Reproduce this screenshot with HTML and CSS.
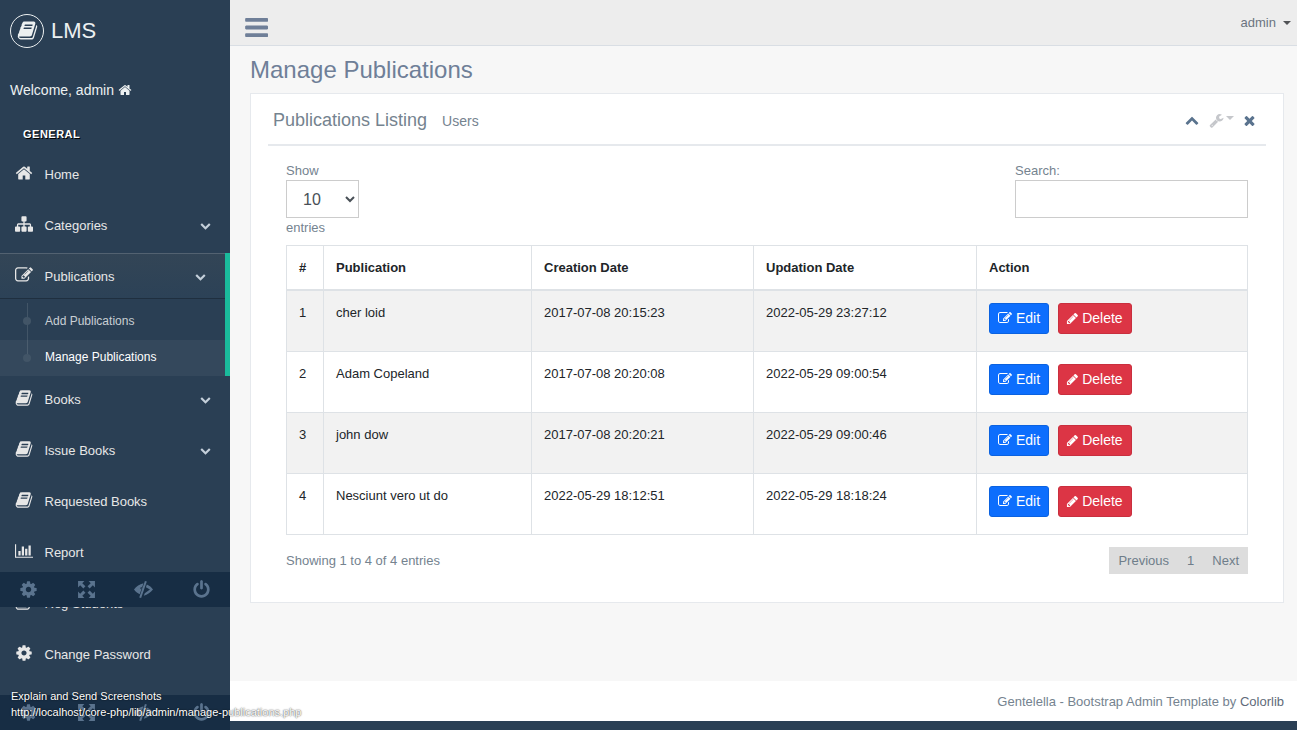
FILE: index.html
```html
<!DOCTYPE html>
<html lang="en">
<head>
<meta charset="utf-8">
<title>Manage Publications</title>
<link rel="stylesheet" href="styles.css">
</head>
<body>
<svg class="defs" width="0" height="0" aria-hidden="true">
  <symbol id="i-home" viewBox="0 0 1792 1792"><path d="M1472 992v480q0 26-19 45t-45 19h-384v-384h-256v384h-384q-26 0-45-19t-19-45v-480q0-1 .5-3t.5-3l575-474 575 474q1 2 1 6zm223-69l-62 74q-8 9-21 11h-3q-13 0-21-7l-692-577-692 577q-12 8-24 7-13-2-21-11l-62-74q-8-10-7-23.5t11-21.5l719-599q32-26 76-26t76 26l244 204v-195q0-14 9-23t23-9h192q14 0 23 9t9 23v408l219 182q10 8 11 21.5t-7 23.5z"/></symbol>
  <symbol id="i-sitemap" viewBox="0 0 1792 1792"><path d="M1792 1248v320q0 40-28 68t-68 28h-320q-40 0-68-28t-28-68v-320q0-40 28-68t68-28h96v-192h-512v192h96q40 0 68 28t28 68v320q0 40-28 68t-68 28h-320q-40 0-68-28t-28-68v-320q0-40 28-68t68-28h96v-192h-512v192h96q40 0 68 28t28 68v320q0 40-28 68t-68 28h-320q-40 0-68-28t-28-68v-320q0-40 28-68t68-28h96v-192q0-52 38-90t90-38h512v-192h-96q-40 0-68-28t-28-68v-320q0-40 28-68t68-28h320q40 0 68 28t28 68v320q0 40-28 68t-68 28h-96v192h512q52 0 90 38t38 90v192h96q40 0 68 28t28 68z"/></symbol>
  <symbol id="i-edit" viewBox="0 0 1792 1792"><path d="M888 1184l116-116-152-152-116 116v56h96v96h56zm440-720q-16-16-33 1l-350 350q-17 17-1 33t33-1l350-350q17-17 1-33zm80 594v190q0 119-84.5 203.5t-203.5 84.5h-832q-119 0-203.5-84.5t-84.5-203.5v-832q0-119 84.5-203.5t203.5-84.5h832q63 0 117 25 15 7 18 23 3 17-9 29l-49 49q-14 14-32 8-23-6-45-6h-832q-66 0-113 47t-47 113v832q0 66 47 113t113 47h832q66 0 113-47t47-113v-126q0-13 9-22l64-64q15-15 35-7t20 29zm-96-738l288 288-672 672h-288v-288zm444 132l-92 92-288-288 92-92q28-28 68-28t68 28l152 152q28 28 28 68t-28 68z"/></symbol>
  <symbol id="i-book" viewBox="0 0 1792 1792"><path d="M1703 478q40 57 18 129l-275 906q-19 64-76.5 107.5t-122.5 43.5h-923q-77 0-148.5-53.5t-99.5-131.5q-24-67-2-127 0-4 3-27t4-37q1-8-3-21.5t-3-19.5q2-11 8-21t16.5-23.5 16.5-23.5q23-38 45-91.5t30-91.5q3-10 .5-30t-.5-28q3-11 17-28t17-23q21-36 42-92t25-90q1-9-2.5-32t.5-28q4-13 22-30.5t22-22.5q19-26 42.5-84.5t27.5-96.5q1-8-3-25.5t-2-26.5q2-8 9-18t18-23 17-21q8-12 16.5-30.5t15-35 16-36 19.5-32 26.5-23.5 36-11.5 47.5 5.5l-1 3q38-9 51-9h761q74 0 114 56t18 130l-274 906q-36 119-71.5 153.5t-128.5 34.5h-869q-27 0-38 15-11 16-1 43 24 70 144 70h923q29 0 56-15.5t35-41.5l300-987q7-22 5-57 38 15 59 43zm-1064 2q-4 13 2 22.5t20 9.5h608q13 0 25.5-9.5t16.5-22.5l21-64q4-13-2-22.5t-20-9.5h-608q-13 0-25.5 9.5t-16.5 22.5zm-83 256q-4 13 2 22.5t20 9.5h608q13 0 25.5-9.5t16.5-22.5l21-64q4-13-2-22.5t-20-9.5h-608q-13 0-25.5 9.5t-16.5 22.5z"/></symbol>
  <symbol id="i-chart" viewBox="0 0 2048 1792"><path d="M640 896v512h-256v-512h256zm384-512v1024h-256v-1024h256zm1024 1152v128h-2048v-1536h128v1408h1920zm-640-896v768h-256v-768h256zm384-384v1152h-256v-1152h256z"/></symbol>
  <symbol id="i-cog" viewBox="0 0 1792 1792"><path d="M1152 896q0-106-75-181t-181-75-181 75-75 181 75 181 181 75 181-75 75-181zm512-109v222q0 12-8 23t-20 13l-185 28q-19 54-39 91 35 50 107 138 10 12 10 25t-9 23q-27 37-99 108t-94 71q-12 0-26-9l-138-108q-44 23-91 38-16 136-29 186-7 28-36 28h-222q-14 0-24.5-8.5t-11.5-21.5l-28-184q-49-16-90-37l-141 107q-10 9-25 9-14 0-25-11-126-114-165-168-7-10-7-23 0-12 8-23 15-21 51-66.5t54-70.5q-27-50-41-99l-183-27q-13-2-21-12.5t-8-23.5v-222q0-12 8-23t19-13l186-28q14-46 39-92-40-57-107-138-10-12-10-24 0-10 9-23 26-36 98.5-107.5t94.5-71.5q13 0 26 10l138 107q44-23 91-38 16-136 29-186 7-28 36-28h222q14 0 24.5 8.5t11.5 21.5l28 184q49 16 90 37l142-107q9-9 24-9 13 0 25 10 129 119 165 170 7 8 7 22 0 12-8 23-15 21-51 66.5t-54 70.5q26 50 41 98l183 28q13 2 21 12.5t8 23.5z"/></symbol>
  <symbol id="i-chev" viewBox="0 0 1792 1792"><path d="M1683 808l-742 741q-19 19-45 19t-45-19l-742-741q-19-19-19-45.5t19-45.5l166-165q19-19 45-19t45 19l531 531 531-531q19-19 45-19t45 19l166 165q19 19 19 45.5t-19 45.5z"/></symbol>
  <symbol id="i-pencil" viewBox="0 0 1792 1792"><path d="M491 1536l91-91-235-235-91 91v107h128v128h107zm523-928q0-22-22-22-10 0-17 7l-542 542q-7 7-7 17 0 22 22 22 10 0 17-7l542-542q7-7 7-17zm-54-192l416 416-832 832h-416v-416zm683 96q0 53-37 90l-166 166-416-416 166-165q36-38 90-38 53 0 91 38l235 234q37 39 37 91z"/></symbol>
  <symbol id="i-full" viewBox="0 0 18 18"><path d="M1 1h6L5 3l3 3-2 2-3-3-2 2zM17 1v6l-2-2-3 3-2-2 3-3-2-2zM1 17v-6l2 2 3-3 2 2-3 3 2 2zM17 17h-6l2-2-3-3 2-2 3 3 2-2z"/></symbol>
  <symbol id="i-eye" viewBox="0 0 20 18"><path fill-rule="evenodd" d="M10 2.500C5.800 3.500 2.500 5.800 0 9c1.500 2.200 3.600 3.900 6 5zM7.700 6.600a1.100 1.100 0 1 0 .2 2.200 1.100 1.100 0 1 0-.2-2.200z"/><path d="M11.500 0l2 .7L7.500 18l-2-.7zM13.500 3.800l-1 2.800L16.800 9 11.300 13l-1 2.500c3.900-1 7.300-3.400 9.700-6.500-1.500-2.200-3.700-4-6.500-5.200z"/></symbol>
  <symbol id="i-power" viewBox="0 0 1792 1792"><path d="M1664 896q0 156-61 298t-164 245-245 164-298 61-298-61-245-164-164-245-61-298q0-182 80.500-343t226.500-270q43-32 95.500-25t83.500 50q32 42 24.500 94.500t-49.500 84.500q-98 74-151.500 181t-53.500 228q0 104 40.500 198.500t109.500 163.500 163.500 109.500 198.500 40.500 198.500-40.500 163.500-109.500 109.500-163.500 40.500-198.500q0-121-53.500-228t-151.500-181q-42-32-49.500-84.500t24.500-94.500q31-43 84-50t95 25q146 109 226.500 270t80.500 343zm-640-768v640q0 52-38 90t-90 38-90-38-38-90v-640q0-52 38-90t90-38 90 38 38 90z"/></symbol>
  <symbol id="i-bars" viewBox="64 256 1664 1280" preserveAspectRatio="none"><path d="M1664 1344v128q0 26-19 45t-45 19h-1408q-26 0-45-19t-19-45v-128q0-26 19-45t45-19h1408q26 0 45 19t19 45zm0-512v128q0 26-19 45t-45 19h-1408q-26 0-45-19t-19-45v-128q0-26 19-45t45-19h1408q26 0 45 19t19 45zm0-512v128q0 26-19 45t-45 19h-1408q-26 0-45-19t-19-45v-128q0-26 19-45t45-19h1408q26 0 45 19t19 45z" transform="translate(-64 0) scale(1.08 1)"/></symbol>
  <symbol id="i-wrench" viewBox="0 0 1792 1792"><path d="M448 1472q0-26-19-45t-45-19-45 19-19 45 19 45 45 19 45-19 19-45zm644-420l-682 682q-37 37-90 37-52 0-91-37l-106-108q-38-36-38-90 0-53 38-91l681-681q39 98 114.500 173.500t173.500 114.500zm634-435q0 39-23 106-47 134-164.500 217.500t-258.500 83.500q-185 0-316.500-131.500t-131.500-316.500 131.500-316.500 316.500-131.500q58 0 121.500 16.500t107.500 46.500q16 11 16 28t-16 28l-293 169v224l193 107q5-3 79-48.500t135.500-81 70.500-35.500q15 0 23.500 10t8.500 25z"/></symbol>
  <symbol id="i-close" viewBox="0 0 1792 1792"><path d="M1490 1322q0 40-28 68l-136 136q-28 28-68 28t-68-28l-294-294-294 294q-28 28-68 28t-68-28l-136-136q-28-28-28-68t28-68l294-294-294-294q-28-28-28-68t28-68l136-136q28-28 68-28t68 28l294 294 294-294q28-28 68-28t68 28l136 136q28 28 28 68t-28 68l-294 294 294 294q28 28 28 68z"/></symbol>
</svg>

<div class="app">
  <aside class="sidebar">
    <div class="brand">
      <span class="brand-ring"><svg class="brand-book"><use href="#i-book"/></svg></span>
      <span class="brand-name">LMS</span>
    </div>
    <p class="welcome">Welcome, admin <svg class="welcome-icon"><use href="#i-home"/></svg></p>
    <h3 class="menu-title">General</h3>
    <ul class="menu">
      <li class="menu-item"><a class="menu-link"><svg class="menu-icon"><use href="#i-home"/></svg>Home</a></li>
      <li class="menu-item"><a class="menu-link"><svg class="menu-icon"><use href="#i-sitemap"/></svg>Categories<svg class="chev"><use href="#i-chev"/></svg></a></li>
      <li class="menu-item is-active">
        <a class="menu-link"><svg class="menu-icon"><use href="#i-edit"/></svg>Publications<svg class="chev"><use href="#i-chev"/></svg></a>
        <ul class="submenu">
          <li class="sub-item">Add Publications</li>
          <li class="sub-item is-current">Manage Publications</li>
        </ul>
      </li>
      <li class="menu-item"><a class="menu-link"><svg class="menu-icon"><use href="#i-book"/></svg>Books<svg class="chev"><use href="#i-chev"/></svg></a></li>
      <li class="menu-item"><a class="menu-link"><svg class="menu-icon"><use href="#i-book"/></svg>Issue Books<svg class="chev"><use href="#i-chev"/></svg></a></li>
      <li class="menu-item"><a class="menu-link"><svg class="menu-icon"><use href="#i-book"/></svg>Requested Books</a></li>
      <li class="menu-item"><a class="menu-link"><svg class="menu-icon"><use href="#i-chart"/></svg>Report</a></li>
      <li class="menu-item"><a class="menu-link"><svg class="menu-icon"><use href="#i-book"/></svg>Reg Students</a></li>
      <li class="menu-item"><a class="menu-link"><svg class="menu-icon"><use href="#i-cog"/></svg>Change Password</a></li>
    </ul>
    <div class="side-bar side-bar-mid">
      <svg class="bar-icon"><use href="#i-cog"/></svg>
      <svg class="bar-icon"><use href="#i-full"/></svg>
      <svg class="bar-icon"><use href="#i-eye"/></svg>
      <svg class="bar-icon"><use href="#i-power"/></svg>
    </div>
    <div class="side-bar side-bar-end">
      <svg class="bar-icon"><use href="#i-cog"/></svg>
      <svg class="bar-icon"><use href="#i-full"/></svg>
      <svg class="bar-icon"><use href="#i-eye"/></svg>
      <svg class="bar-icon"><use href="#i-power"/></svg>
    </div>
  </aside>

  <div class="main">
    <header class="topnav">
      <svg class="burger"><use href="#i-bars"/></svg>
      <span class="user">admin<span class="caret"></span></span>
    </header>

    <main class="content">
      <h3 class="page-title">Manage Publications</h3>
      <section class="panel">
        <div class="panel-head">
          <h2 class="panel-title">Publications Listing</h2>
          <small class="panel-sub">Users</small>
          <div class="panel-tools">
            <svg class="tool tool-up"><use href="#i-chev"/></svg>
            <span class="tool-wrench"><svg class="tool-lg"><use href="#i-wrench"/></svg><span class="tool-caret"></span></span>
            <svg class="tool-lg"><use href="#i-close"/></svg>
          </div>
        </div>

        <div class="panel-body">
          <div class="controls">
            <div class="length">
              <label class="field-label" for="length">Show</label>
              <select class="length-select" id="length"><option>10</option></select>
              <span class="field-label">entries</span>
            </div>
            <div class="search">
              <label class="field-label" for="search">Search:</label>
              <input class="search-input" id="search" type="search">
            </div>
          </div>

          <table class="grid">
            <thead>
              <tr><th class="c-num">#</th><th class="c-pub">Publication</th><th class="c-created">Creation Date</th><th class="c-updated">Updation Date</th><th>Action</th></tr>
            </thead>
            <tbody>
              <tr>
                <td>1</td><td>cher loid</td><td>2017-07-08 20:15:23</td><td>2022-05-29 23:27:12</td>
                <td><div class="actions"><a class="btn btn-edit"><svg class="btn-icon"><use href="#i-edit"/></svg>Edit</a><a class="btn btn-del"><svg class="btn-icon"><use href="#i-pencil"/></svg>Delete</a></div></td>
              </tr>
              <tr>
                <td>2</td><td>Adam Copeland</td><td>2017-07-08 20:20:08</td><td>2022-05-29 09:00:54</td>
                <td><div class="actions"><a class="btn btn-edit"><svg class="btn-icon"><use href="#i-edit"/></svg>Edit</a><a class="btn btn-del"><svg class="btn-icon"><use href="#i-pencil"/></svg>Delete</a></div></td>
              </tr>
              <tr>
                <td>3</td><td>john dow</td><td>2017-07-08 20:20:21</td><td>2022-05-29 09:00:46</td>
                <td><div class="actions"><a class="btn btn-edit"><svg class="btn-icon"><use href="#i-edit"/></svg>Edit</a><a class="btn btn-del"><svg class="btn-icon"><use href="#i-pencil"/></svg>Delete</a></div></td>
              </tr>
              <tr>
                <td>4</td><td>Nesciunt vero ut do</td><td>2022-05-29 18:12:51</td><td>2022-05-29 18:18:24</td>
                <td><div class="actions"><a class="btn btn-edit"><svg class="btn-icon"><use href="#i-edit"/></svg>Edit</a><a class="btn btn-del"><svg class="btn-icon"><use href="#i-pencil"/></svg>Delete</a></div></td>
              </tr>
            </tbody>
          </table>

          <div class="table-foot">
            <span class="info">Showing 1 to 4 of 4 entries</span>
            <nav class="pager"><a class="page">Previous</a><a class="page">1</a><a class="page">Next</a></nav>
          </div>
        </div>
      </section>
    </main>

    <footer class="footer">Gentelella - Bootstrap Admin Template by&nbsp;<a class="footer-link">Colorlib</a></footer>
  </div>
</div>

<div class="status-tip">
  <div>Explain and Send Screenshots</div>
  <div>http://localhost/core-php/lib/admin/manage-publications.php</div>
</div>
</body>
</html>
```
FILE: styles.css
```css
* { box-sizing: border-box; }
html, body { height: 100%; }
body {
  margin: 0;
  background: #2a3f54;
  font-family: "Liberation Sans", Arial, sans-serif;
  font-size: 13px;
  line-height: 1.5;
  color: #75838f;
  overflow: hidden;
}
svg { fill: currentColor; display: block; }
.defs { position: absolute; }
ul { list-style: none; margin: 0; padding: 0; }

.app { display: flex; height: 730px; position: relative; }

/* Sidebar */
.sidebar {
  width: 230px;
  flex: none;
  height: 730px;
  position: relative;
  overflow: hidden;
  color: #e7e7e7;
}
.brand { display: flex; align-items: center; height: 60px; padding: 1px 0 0 10px; gap: 7px; color: #ecf0f1; }
.brand-ring {
  width: 34px; height: 34px;
  border: 1px solid #ecf0f1;
  border-radius: 50%;
  display: flex; align-items: center; justify-content: center;
}
.brand-book { width: 21px; height: 21px; }
.brand-name { font-size: 22px; line-height: 1; }
.welcome {
  margin: 20px 0 0;
  padding-left: 10px;
  height: 20px;
  display: flex; align-items: center; gap: 4px;
  font-size: 14px;
  color: #ecf0f1;
}
.welcome-icon { width: 14px; height: 14px; }
.menu-title {
  margin: 26px 0 0;
  padding-left: 23px;
  height: 16px;
  font-size: 11px;
  line-height: 16px;
  font-weight: 700;
  letter-spacing: .5px;
  text-transform: uppercase;
  color: #fff;
  text-shadow: 1px 1px #000;
}
.menu { margin-top: 10px; }
.menu-item { margin-bottom: 6px; }
.menu-link {
  display: flex; align-items: center;
  height: 45px;
  padding-left: 15px;
  color: #e7e7e7;
  font-size: 13px;
}
.menu-icon { width: 18px; height: 18px; margin-right: 11.5px; margin-top: -3px; flex: none; }
.chev { width: 11px; height: 11px; margin-left: auto; margin-right: 19px; color: #c4cfda; }
.menu-item.is-active {
  margin-top: -1px;
  margin-bottom: 1px;
  border-right: 5px solid #1abb9c;
  height: 123px;
}
.is-active .menu-link {
  height: 45px;
  padding-top: 2px;
  background: linear-gradient(#334556, #2c4257);
  box-shadow: rgba(0,0,0,.25) 0 1px 0, inset rgba(255,255,255,.16) 0 1px 0;
}
.submenu { position: relative; margin-top: 5px; }
.submenu::before {
  content: "";
  position: absolute;
  left: 27px; top: 0; bottom: 17px;
  width: 1px;
  background: #425567;
}
.sub-item {
  position: relative;
  height: 36px;
  line-height: 36px;
  padding-left: 45px;
  font-size: 12px;
  color: rgba(255,255,255,.75);
}
.sub-item::before {
  content: "";
  position: absolute;
  left: 23px; top: 14px;
  width: 8px; height: 8px;
  border-radius: 50%;
  background: #425567;
}
.sub-item.is-current { background: rgba(255,255,255,.05); color: #fff; margin-top: 1px; line-height: 34px; }

.side-bar {
  position: absolute; left: 0; right: 0;
  height: 35px;
  background: #172d44;
  display: grid;
  grid-template-columns: repeat(4, 1fr);
  justify-items: center;
  align-items: center;
  color: #5a738e;
}
.side-bar-mid { top: 572px; }
.side-bar-end { top: 695px; }
.bar-icon { width: 19px; height: 19px; }

/* Main */
.main { flex: 1; min-width: 0; height: 721px; display: flex; flex-direction: column; }
.topnav {
  height: 46px;
  flex: none;
  background: #ededed;
  border-bottom: 1px solid #d9dee4;
  display: flex; align-items: center; justify-content: space-between;
  padding: 0 6px 0 15px;
}
.burger { width: 23px; height: 19px; margin-top: 9px; color: #6f7f98; }
.user { display: flex; align-items: center; color: #6b7480; margin-top: 1px; }
.caret {
  width: 0; height: 0;
  margin-left: 7px;
  border-left: 4px solid transparent;
  border-right: 4px solid transparent;
  border-top: 4px solid #515356;
}
.content { flex: 1; background: #f7f7f7; padding: 0 13px 0 20px; }
.page-title { margin: 10px 0 9px; height: 28px; font-size: 24px; line-height: 28px; font-weight: 400; color: #6f7f98; }
.panel {
  background: #fff;
  border: 1px solid #e6e9ed;
  height: 510px;
  padding: 0 17px;
}
.panel-head {
  display: flex; align-items: center;
  height: 52px;
  padding: 2px 9px 0 5px;
  border-bottom: 2px solid #e6e9ed;
}
.panel-title { margin: 0; font-size: 18px; font-weight: 400; color: #75838f; line-height: 1.5; }
.panel-sub { margin-left: 15px; font-size: 14px; color: #75838f; margin-top: 2px; }
.panel-tools { margin-left: auto; display: flex; align-items: center; color: #5a738e; }
.tool { width: 14px; height: 14px; }
.tool-lg { width: 15px; height: 15px; }
.tool-up { transform: translateY(2px) rotate(180deg); }
.tool-wrench { display: flex; align-items: flex-start; color: #c5c7cb; gap: 2px; margin: 0 8px 0 10px; }
.tool-caret {
  width: 0; height: 0; margin-top: 3px;
  border-left: 4px solid transparent;
  border-right: 4px solid transparent;
  border-top: 4px solid #c5c7cb;
}
.panel-body { padding: 15px 18px 0; }
.controls { display: flex; justify-content: space-between; align-items: flex-start; height: 84px; }
.length { display: flex; flex-direction: column; align-items: flex-start; }
.field-label { height: 19px; line-height: 19px; display: block; }
.length-select {
  width: 73px; height: 38px;
  background: #fff;
  border: 1px solid #ccc;
  padding: 0 0 0 12px;
  font: 16px "Liberation Sans", Arial, sans-serif;
  color: #495057;
  margin-bottom: 0;
}
.search { width: 233px; }
.search-input { width: 233px; height: 38px; border: 1px solid #ccc; background: #fff; display: block; margin: 0; padding: 0; }

.grid { width: 962px; border-collapse: collapse; table-layout: fixed; color: #212529; }
.grid th, .grid td { border: 1px solid #dee2e6; padding: 12px; vertical-align: top; text-align: left; }
.grid th { border-bottom-width: 2px; font-weight: 700; height: 43px; padding: 12px 12px 11px; }
.grid td { height: 61px; }
.grid tbody tr:nth-child(odd) { background: #f2f2f2; }
.c-num { width: 37px; }
.c-pub { width: 208px; }
.c-created { width: 222px; }
.c-updated { width: 223px; }
.actions { display: flex; gap: 9px; height: 36px; }
.btn {
  display: flex; align-items: center; gap: 4px;
  height: 31px;
  padding: 0 8px;
  border: 1px solid;
  border-radius: 3px;
  font-size: 14px;
  color: #fff;
}
.btn-edit { background: #0d6efd; border-color: #0b62e0; }
.btn-del { background: #dc3545; border-color: #c92f3e; gap: 3px; padding: 0 8px 0 7px; }
.btn-icon { width: 14px; height: 14px; }
.btn-del .btn-icon { width: 13px; height: 13px; }
.table-foot { display: flex; justify-content: space-between; align-items: flex-start; margin-top: 12px; }
.info { line-height: 27px; }
.pager { display: flex; background: #ddd; height: 27px; line-height: 27px; padding: 0 9px; gap: 18px; }
.page { color: #6f7d8a; }

.footer {
  height: 40px;
  flex: none;
  background: #fff;
  display: flex; align-items: center; justify-content: flex-end;
  padding: 1px 13px 0 0;
}
.footer-link { color: #5f6b7a; }

/* Browser status bubble, floats over the page */
.status-tip {
  position: absolute;
  left: 11px; top: 688px;
  font-size: 11px;
  line-height: 16px;
  color: #fff;
  text-shadow: 0 0 1.5px #000;
  white-space: nowrap;
}
```
